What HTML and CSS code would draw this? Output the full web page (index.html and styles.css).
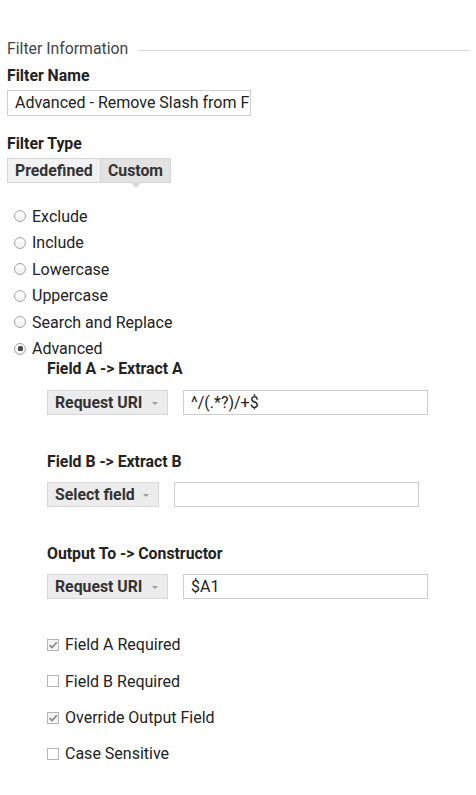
FILE: index.html
```html
<!DOCTYPE html>
<html>
<head>
<meta charset="utf-8">
<link rel="stylesheet" href="styles.css">
</head>
<body>
<div class="page">
  <div class="section-head"><span>Filter Information</span><span class="rule"></span></div>

  <div class="label label-name">Filter Name</div>
  <div class="text-input name-input">Advanced - Remove Slash from F</div>

  <div class="label label-type">Filter Type</div>
  <div class="tabs">
    <div class="tab">Predefined</div>
    <div class="tab tab-active">Custom</div>
  </div>

  <div class="radios">
    <div class="radio-row"><span class="radio"></span>Exclude</div>
    <div class="radio-row"><span class="radio"></span>Include</div>
    <div class="radio-row"><span class="radio"></span>Lowercase</div>
    <div class="radio-row"><span class="radio"></span>Uppercase</div>
    <div class="radio-row"><span class="radio"></span>Search and Replace</div>
    <div class="radio-row"><span class="radio radio-on"></span>Advanced</div>
  </div>

  <div class="advanced">
    <div class="label sub-label first">Field A -&gt; Extract A</div>
    <div class="field-row">
      <div class="select sel-wide">Request URI<span class="caret"></span></div>
      <div class="text-input field-input">^/(.*?)/+$</div>
    </div>

    <div class="label sub-label">Field B -&gt; Extract B</div>
    <div class="field-row">
      <div class="select sel-narrow">Select field<span class="caret"></span></div>
      <div class="text-input field-input"></div>
    </div>

    <div class="label sub-label">Output To -&gt; Constructor</div>
    <div class="field-row">
      <div class="select sel-wide">Request URI<span class="caret"></span></div>
      <div class="text-input field-input">$A1</div>
    </div>

    <div class="checks">
      <div class="check-row"><span class="check check-on"><svg viewBox="0 0 12 12" width="12" height="12"><path d="M2.5 6.2 L5 8.6 L9.8 3.4" fill="none" stroke="#8a8a8a" stroke-width="1.6"/></svg></span>Field A Required</div>
      <div class="check-row"><span class="check"></span>Field B Required</div>
      <div class="check-row"><span class="check check-on"><svg viewBox="0 0 12 12" width="12" height="12"><path d="M2.5 6.2 L5 8.6 L9.8 3.4" fill="none" stroke="#8a8a8a" stroke-width="1.6"/></svg></span>Override Output Field</div>
      <div class="check-row"><span class="check"></span>Case Sensitive</div>
    </div>
  </div>
</div>
</body>
</html>
```

FILE: styles.css
```css
* { box-sizing: border-box; }
html, body { margin: 0; padding: 0; background: #fff; }
body {
  font-family: Roboto, "Liberation Sans", Arial, sans-serif;
  color: #222;
  font-size: 16px;
}
.page {
  padding: 38px 6px 30px 7px;
}
.section-head {
  display: flex;
  align-items: center;
  height: 20px;
  font-size: 15.8px;
  color: #444;
}
.section-head .rule {
  flex: 1;
  height: 1px;
  background: #d8d8d8;
  margin-left: 10px;
  margin-top: 4px;
}
.label {
  font-weight: bold;
  font-size: 15.8px;
  line-height: 20px;
  color: #222;
}
.label-name { margin-top: 8px; }
.label-type { margin-top: 18px; }
.text-input {
  border: 1px solid #cfcfcf;
  height: 26px;
  line-height: 24px;
  padding-left: 7px;
  font-size: 16px;
  color: #222;
  white-space: nowrap;
  overflow: hidden;
  background: #fff;
}
.name-input {
  width: 244px;
  margin-top: 4px;
}
.tabs {
  display: flex;
  margin-top: 4px;
}
.tab {
  position: relative;
  height: 25px;
  line-height: 23px;
  padding: 0 7px;
  font-weight: bold;
  font-size: 15.8px;
  color: #333;
  background: #f2f2f2;
  border: 1px solid #d6d6d6;
}
.tab:first-child { width: 93px; border-right: none; }
.tab-active { width: 71px; background: #e2e2e2; }
.tab-active::after {
  content: "";
  position: absolute;
  left: 29px;
  bottom: -6px;
  border-left: 6px solid transparent;
  border-right: 6px solid transparent;
  border-top: 6px solid #dcdcdc;
}
.radios {
  margin-top: 23px;
  display: flex;
  flex-direction: column;
  gap: 6.6px;
}
.radio-row {
  display: flex;
  align-items: center;
  height: 20px;
  font-size: 16px;
}
.radio {
  width: 12px;
  height: 12px;
  border: 1px solid #a5a5a5;
  border-radius: 50%;
  margin-left: 7px;
  margin-right: 6px;
  position: relative;
  background: linear-gradient(#fff, #efefef);
}
.radio-on::after {
  content: "";
  position: absolute;
  left: 2.5px;
  top: 2.5px;
  width: 5px;
  height: 5px;
  border-radius: 1.5px;
  background: #4a4a4a;
}
.advanced {
  padding-left: 40px;
}
.sub-label {
  line-height: 18px;
  margin-top: 38px;
}
.sub-label.first { margin-top: 1px; }
.field-row {
  display: flex;
  gap: 15px;
  margin-top: 11px;
}
.first + .field-row { margin-top: 12px; }
.select {
  position: relative;
  height: 25px;
  line-height: 23px;
  padding-left: 7px;
  font-weight: bold;
  font-size: 15.8px;
  color: #333;
  background: #ececec;
  border: 1px solid #d8d8d8;
}
.sel-wide { width: 121px; }
.sel-narrow { width: 112px; }
.caret {
  position: absolute;
  right: 9px;
  top: 11px;
  border-left: 3px solid transparent;
  border-right: 3px solid transparent;
  border-top: 3px solid #9a9a9a;
}
.field-input {
  width: 245px;
  height: 25px;
  line-height: 23px;
}
.checks {
  margin-top: 36px;
  display: flex;
  flex-direction: column;
  gap: 16.3px;
}
.check-row {
  display: flex;
  align-items: center;
  height: 20px;
  font-size: 16px;
}
.check {
  width: 12px;
  height: 12px;
  border: 1px solid #b5b5b5;
  margin-right: 6px;
  display: flex;
  align-items: center;
  justify-content: center;
  background: #fff;
}
.check svg { display: block; flex: none; }
.check-on { background: #f4f4f4; }
```
